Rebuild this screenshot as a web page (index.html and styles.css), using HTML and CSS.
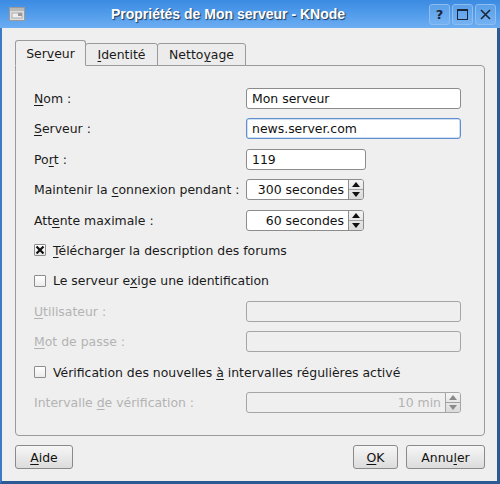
FILE: index.html
```html
<!DOCTYPE html>
<html lang="fr">
<head>
<meta charset="utf-8">
<link rel="stylesheet" href="styles.css">
</head>
<body>
<div class="window">
  <div class="titlebar">
    <div class="app-icon">
      <svg width="16" height="14" viewBox="0 0 16 14">
        <rect x="0.5" y="0.5" width="15" height="13" fill="#dcdcdc" stroke="#9a9a9a"/>
        <rect x="1" y="1" width="14" height="3" fill="#b8b8b8"/>
        <rect x="3" y="6" width="10" height="5" fill="#eeeeee" stroke="#a0a0a0" stroke-width="0.8"/>
        <rect x="9" y="6" width="4" height="3" fill="#9a9a9a"/>
      </svg>
    </div>
    <div class="title">Propriétés de Mon serveur - KNode</div>
    <div class="tbuttons">
      <div class="tbtn">?</div>
      <div class="tbtn"><span class="max"></span></div>
      <div class="tbtn">
        <svg width="11" height="11" viewBox="0 0 11 11"><path d="M1 1 L10 10 M10 1 L1 10" stroke="#1b2638" stroke-width="1.6"/></svg>
      </div>
    </div>
  </div>

  <div class="content">
    <div class="tabs">
      <div class="tab active"><span>Ser<u>v</u>eur</span></div>
      <div class="tab"><span><u>I</u>dentité</span></div>
      <div class="tab"><span>Netto<u>y</u>age</span></div>
    </div>
    <div class="panel">
      <div class="form">
        <div class="label"><u>N</u>om :</div>
        <div class="ctl"><div class="input wide">Mon serveur</div></div>

        <div class="label"><u>S</u>erveur :</div>
        <div class="ctl"><div class="input wide focus">news.server.com</div></div>

        <div class="label">Po<u>r</u>t :</div>
        <div class="ctl"><div class="input short">119</div></div>

        <div class="label">Maintenir la <u>c</u>onnexion pendant :</div>
        <div class="ctl">
          <div class="spin">
            <div class="spin-field">300 secondes</div>
            <div class="spin-btns"><span class="up"></span><span class="down"></span></div>
          </div>
        </div>

        <div class="label">Att<u>e</u>nte maximale :</div>
        <div class="ctl">
          <div class="spin">
            <div class="spin-field">60 secondes</div>
            <div class="spin-btns"><span class="up"></span><span class="down"></span></div>
          </div>
        </div>

        <div class="check span">
          <span class="box checked">
            <svg width="10" height="10" viewBox="0 0 10 10"><path d="M1.5 1.5 L8.5 8.5 M8.5 1.5 L1.5 8.5" stroke="#111" stroke-width="2.2"/></svg>
          </span>
          <span class="ctext"><u>T</u>élécharger la description des forums</span>
        </div>

        <div class="check span">
          <span class="box"></span>
          <span class="ctext">Le serveur e<u>x</u>ige une identification</span>
        </div>

        <div class="label disabled"><u>U</u>tilisateur :</div>
        <div class="ctl"><div class="input wide off"></div></div>

        <div class="label disabled"><u>M</u>ot de passe :</div>
        <div class="ctl"><div class="input wide off"></div></div>

        <div class="check span">
          <span class="box"></span>
          <span class="ctext">Vérification des nouvelles <u>à</u> intervalles régulières activé</span>
        </div>

        <div class="label disabled">Intervalle <u>d</u>e vérification :</div>
        <div class="ctl">
          <div class="spin widespin off">
            <div class="spin-field">10 min</div>
            <div class="spin-btns"><span class="up"></span><span class="down"></span></div>
          </div>
        </div>
      </div>
    </div>
    <div class="buttons">
      <div class="btn aide"><span><u>A</u>ide</span></div>
      <div class="spacer"></div>
      <div class="btn ok"><span><u>O</u>K</span></div>
      <div class="btn cancel"><span>Annu<u>l</u>er</span></div>
    </div>
  </div>
</div>
</body>
</html>
```

FILE: styles.css
```css
* { box-sizing: border-box; }
html, body { margin: 0; padding: 0; }
body {
  width: 500px;
  height: 484px;
  overflow: hidden;
  font-family: "DejaVu Sans", sans-serif;
  font-size: 12.45px;
  color: #1a1a1a;
  background: #efefef;
}
u { text-decoration: underline; text-underline-offset: 2px; }

.window {
  width: 500px;
  height: 484px;
  display: flex;
  flex-direction: column;
  background: #efefef;
  border-left: 2px solid #3d79c4;
  border-right: 3px solid #2c5a94;
  border-bottom: 3px solid #2c5a94;
}

.titlebar {
  height: 28px;
  flex: none;
  display: flex;
  align-items: center;
  margin-left: -2px;
  margin-right: -3px;
  padding: 0 4px 0 9px;
  background: linear-gradient(to bottom, #3b8be2 0%, #4f9aea 45%, #6cadf2 100%);
}
.app-icon { width: 16px; height: 14px; display: flex; }
.title {
  flex: 1;
  text-align: center;
  color: #fff;
  font-family: "Liberation Sans", Arial, sans-serif;
  font-weight: bold;
  font-size: 14px;
  text-shadow: 1px 1px 1px #1d3557;
  padding-left: 2px;
}
.tbuttons { display: flex; gap: 2px; }
.tbtn {
  width: 21px;
  height: 21px;
  border: 1px solid #8fbdf0;
  border-radius: 3px;
  background: linear-gradient(to bottom, #5a9fe9, #74b2f2);
  display: flex;
  align-items: center;
  justify-content: center;
  color: #1b2638;
  font-weight: bold;
  font-size: 13px;
}
.max { width: 11px; height: 11px; border: 1.5px solid #1b2638; border-top-width: 2.5px; }

.content {
  flex: 1;
  display: flex;
  flex-direction: column;
  padding: 12px 12px 12px 13px;
}

.tabs { display: flex; align-items: flex-end; height: 26px; margin-bottom: -1px; position: relative; z-index: 1; }
.tab {
  height: 23px;
  display: flex;
  align-items: center;
  justify-content: center;
  border: 1px solid #9a9a9a;
  border-radius: 3px 3px 0 0;
  background: #ececec;
  margin-left: -1px;
}
.tab:first-child { margin-left: 0; }
.tab.active {
  height: 26px;
  width: 71px;
  background: #efefef;
  border-bottom-color: #efefef;
  z-index: 2;
}
.tab:nth-child(2) { width: 73px; }
.tab:nth-child(3) { width: 89px; }

.panel {
  height: 371px;
  border: 1px solid #9a9a9a;
  border-radius: 0 4px 4px 4px;
  padding: 22px 0 0 18px;
  background: #efefef;
}

.form {
  display: grid;
  grid-template-columns: 212px 1fr;
  grid-auto-rows: 21px;
  row-gap: 9.4px;
}
.label { line-height: 21px; white-space: nowrap; }
.label.disabled { color: #b3b3b3; }
.ctl { display: flex; align-items: center; }
.span { grid-column: 1 / 3; }

.input {
  height: 21px;
  border: 1px solid #8c8c8c;
  border-radius: 3px;
  background: #fff;
  padding: 0 5px;
  line-height: 19px;
  color: #111;
  white-space: nowrap;
}
.input.wide { width: 215px; }
.input.short { width: 120px; }
.input.focus { border-color: #5f8fcc; box-shadow: inset 0 0 0 0.5px #9fc1ea; }
.input.off { background: #efefef; border-color: #a5a5a5; }

.spin {
  width: 118px;
  height: 21px;
  display: flex;
  border: 1px solid #8c8c8c;
  border-radius: 3px;
  background: #fff;
  overflow: hidden;
}
.spin-field {
  flex: 1;
  line-height: 19px;
  text-align: right;
  white-space: nowrap;
  padding-right: 4px;
  color: #111;
}
.spin-btns {
  width: 15px;
  display: flex;
  flex-direction: column;
  border-left: 1px solid #8c8c8c;
  background: linear-gradient(to bottom, #f4f4f4, #dadada);
}
.spin-btns span { flex: 1; display: flex; align-items: center; justify-content: center; }
.spin-btns .up { border-bottom: 1px solid #a0a0a0; }
.spin-btns .up::after {
  content: "";
  border-left: 4px solid transparent;
  border-right: 4px solid transparent;
  border-bottom: 5px solid #111;
}
.spin-btns .down::after {
  content: "";
  border-left: 4px solid transparent;
  border-right: 4px solid transparent;
  border-top: 5px solid #111;
}
.spin.widespin { width: 215px; }
.spin.off { background: #efefef; border-color: #a5a5a5; }
.spin.off .spin-field { color: #b3b3b3; }
.spin.off .spin-btns { border-left-color: #a5a5a5; }
.spin.off .spin-btns .up::after { border-bottom-color: #8a8a8a; }
.spin.off .spin-btns .down::after { border-top-color: #8a8a8a; }

.check { display: flex; align-items: center; gap: 7px; }
.ctext { white-space: nowrap; }
.box {
  width: 12px;
  height: 12px;
  border: 1px solid #8c8c8c;
  border-radius: 1px;
  background: linear-gradient(to bottom, #ffffff, #ececec);
  display: flex;
  align-items: center;
  justify-content: center;
}

.buttons { display: flex; gap: 8px; margin-top: 9px; }
.spacer { flex: 1; }
.btn {
  height: 24px;
  border: 1px solid #8a8a8a;
  border-radius: 3px;
  background: linear-gradient(to bottom, #f6f6f6, #dcdcdc);
  display: flex;
  align-items: center;
  justify-content: center;
  color: #111;
}
.btn.aide { width: 58px; }
.btn.ok { width: 45px; }
.btn.cancel { width: 79px; }
```
